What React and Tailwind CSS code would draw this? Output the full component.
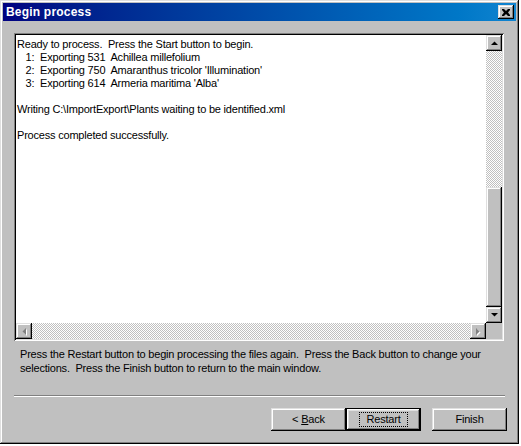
import React from 'react';

const raised =
  'shadow-[inset_-1px_-1px_#000,inset_1px_1px_#dfdfdf,inset_-2px_-2px_#808080,inset_2px_2px_#fff]';
const hatch =
  'bg-[repeating-conic-gradient(#c0c0c0_0_25%,#fff_0_50%)] bg-[length:2px_2px]';

function Arrow({ dir, disabled }) {
  const pts = {
    up: '0,4 7,4 3.5,0.5',
    down: '0,0 7,0 3.5,3.5',
    left: '4,0 4,7 0.5,3.5',
    right: '0,0 0,7 3.5,3.5',
  }[dir];
  const vertical = dir === 'up' || dir === 'down';
  return (
    <div className={`w-4 h-4 bg-[#c0c0c0] ${raised} flex items-center justify-center shrink-0`}>
      <svg width={vertical ? 7 : 4} height={vertical ? 4 : 7} className="overflow-visible">
        {disabled && <polygon points={pts} fill="#fff" transform="translate(1,1)" />}
        <polygon points={pts} fill={disabled ? '#808080' : '#000'} />
      </svg>
    </div>
  );
}

function Button({ children, focused }) {
  return (
    <div
      className={`w-[75px] h-[23px] bg-[#c0c0c0] flex items-center justify-center ${
        focused
          ? 'shadow-[inset_0_0_0_1px_#000,inset_-2px_-2px_#000,inset_2px_2px_#fff,inset_-3px_-3px_#808080,inset_3px_3px_#dfdfdf]'
          : raised
      }`}
    >
      <div
        className={`px-[6px] h-[15px] flex items-center leading-none whitespace-pre ${
          focused ? 'border border-dotted border-black' : 'border border-transparent'
        }`}
      >
        {children}
      </div>
    </div>
  );
}

const lines = [
  'Ready to process.  Press the Start button to begin.',
  '   1:  Exporting 531  Achillea millefolium',
  "   2:  Exporting 750  Amaranthus tricolor 'Illumination'",
  "   3:  Exporting 614  Armeria maritima 'Alba'",
  '',
  'Writing C:\\ImportExport\\Plants waiting to be identified.xml',
  '',
  'Process completed successfully.',
];

export default function App() {
  return (
    <div className="w-[521px] h-[446px] bg-white font-['Liberation_Sans',Arial,sans-serif] text-[11px] tracking-[-0.2px] text-black">
      <div className={`w-[519px] h-[444px] bg-[#c0c0c0] p-[3px] flex flex-col ${raised}`}>
        <div className="h-[18px] bg-gradient-to-r from-[#000080] to-[#1084d0] flex items-center justify-between pl-[3px] pr-[2px]">
          <span className="text-white font-bold text-[12px] tracking-[0.2px]">Begin process</span>
          <div className={`w-4 h-[14px] bg-[#c0c0c0] ${raised} flex items-center justify-center`}>
            <svg width="8" height="7" viewBox="0 0 8 7">
              <path d="M0 0h2l2 2 2-2h2v1L6 3.5 8 6v1H6L4 5 2 7H0V6l2-2.5L0 1z" fill="#000" />
            </svg>
          </div>
        </div>

        <div className="mt-[12px] ml-[11px] w-[490px] h-[308px] shadow-[inset_1px_1px_#808080,inset_-1px_-1px_#fff,inset_2px_2px_#000,inset_-2px_-2px_#dfdfdf] p-[2px] flex flex-col">
          <div className="flex flex-1 min-h-0 bg-white">
            <div className="flex-1 pl-[1px] pt-[3px] leading-[13px] whitespace-pre">
              {lines.map((l, i) => (
                <div key={i} className="h-[13px]">{l}</div>
              ))}
            </div>
            <div className="w-4 flex flex-col">
              <Arrow dir="up" />
              <div className={`h-[136px] ${hatch}`} />
              <div className={`flex-1 bg-[#c0c0c0] ${raised}`} />
              <Arrow dir="down" />
            </div>
          </div>
          <div className="flex h-4">
            <Arrow dir="left" disabled />
            <div className={`flex-1 ${hatch}`} />
            <Arrow dir="right" disabled />
            <div className="w-4 bg-[#c0c0c0]" />
          </div>
        </div>

        <div className="ml-[17px] mt-[6px] leading-[14px] whitespace-pre">
          {'Press the Restart button to begin processing the files again.  Press the Back button to change your'}
          <br />
          {'selections.  Press the Finish button to return to the main window.'}
        </div>

        <div className="ml-[11px] mt-[20px] w-[491px] h-[2px] border-t border-t-[#808080] border-b border-b-white" />

        <div className="mt-[11px] flex pl-[268px]">
          <Button>
            {'< '}
            <span className="underline">B</span>ack
          </Button>
          <Button focused>Restart</Button>
          <div className="w-[11px]" />
          <Button>Finish</Button>
        </div>
      </div>
    </div>
  );
}
